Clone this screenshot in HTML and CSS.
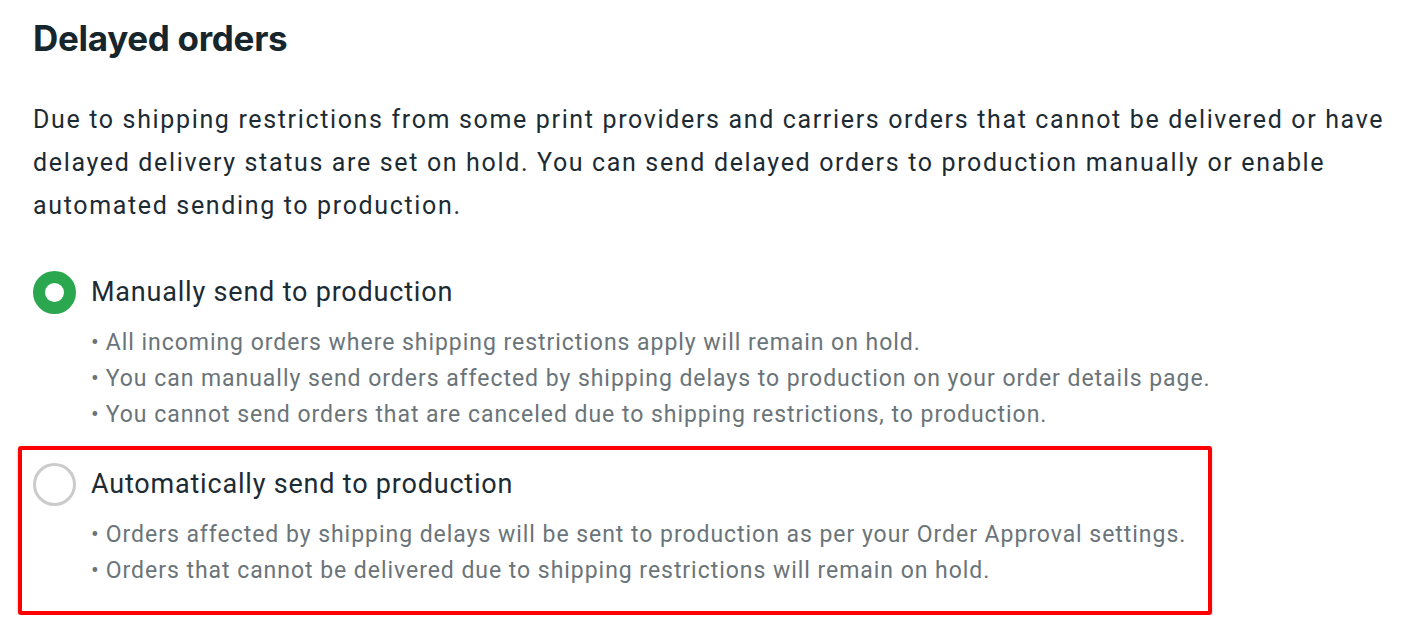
FILE: index.html
```html
<!DOCTYPE html>
<html lang="en">
<head>
    <meta charset="UTF-8">
    <meta name="viewport" content="width=device-width, initial-scale=1.0">
    <title>Delayed orders</title>
    <link rel="stylesheet" href="styles.css">
</head>
<body>
    <div class="page">
        <h1 class="title">Delayed orders</h1>
        <p class="intro">Due to shipping restrictions from some print providers and carriers orders that cannot be delivered or have delayed delivery status are set on hold. You can send delayed orders to production manually or enable automated sending to production.</p>

        <div class="option">
            <label class="option-row">
                <input type="radio" name="delayed" value="manual" checked>
                <span class="radio"></span>
                <span class="option-label">Manually send to production</span>
            </label>
            <ul class="notes">
                <li>All incoming orders where shipping restrictions apply will remain on hold.</li>
                <li>You can manually send orders affected by shipping delays to production on your order details page.</li>
                <li>You cannot send orders that are canceled due to shipping restrictions, to production.</li>
            </ul>
        </div>

        <div class="option highlight">
            <label class="option-row">
                <input type="radio" name="delayed" value="auto">
                <span class="radio"></span>
                <span class="option-label">Automatically send to production</span>
            </label>
            <ul class="notes">
                <li>Orders affected by shipping delays will be sent to production as per your Order Approval settings.</li>
                <li>Orders that cannot be delivered due to shipping restrictions will remain on hold.</li>
            </ul>
        </div>
    </div>
</body>
</html>
```

FILE: styles.css
```css
body {
    margin: 0;
    background: #ffffff;
    font-family: Roboto, "Noto Sans", Arial, sans-serif;
    color: #1c2b33;
}
.page {
    padding: 18px 8px 0 33px;
}
.title {
    margin: 0;
    font-family: Inter, "Noto Sans", sans-serif;
    font-size: 35px;
    line-height: 40px;
    font-weight: 700;
    letter-spacing: -0.3px;
    color: #17262c;
}
.intro {
    margin: 40px 0 0 0;
    font-size: 25px;
    line-height: 43px;
    letter-spacing: 1.65px;
}
.option {
    margin-top: 44px;
}
.option-row {
    display: flex;
    align-items: center;
    gap: 15px;
    cursor: pointer;
}
.option-row input {
    display: none;
}
.radio {
    width: 43px;
    height: 43px;
    box-sizing: border-box;
    border-radius: 50%;
    border: 3px solid #cbcbcb;
    flex-shrink: 0;
}
.option-row input:checked + .radio {
    border: 12px solid #2ba84f;
}
.option-label {
    font-size: 27px;
    line-height: 43px;
    letter-spacing: 0.8px;
}
.notes {
    list-style: none;
    margin: 11px 0 0 0;
    padding: 0 0 0 58px;
    font-size: 23px;
    line-height: 36px;
    letter-spacing: 0.96px;
    color: #6a7479;
}
.notes li::before {
    content: "\2022";
    margin-right: 6px;
}
.highlight {
    margin: 13px 0 0 -15px;
    width: fit-content;
    padding: 13px 22px 22px 11px;
    border: 4px solid #ff0000;
    border-radius: 3px;
    box-shadow: 0 1px 3px rgba(0, 0, 0, 0.25);
}
```
